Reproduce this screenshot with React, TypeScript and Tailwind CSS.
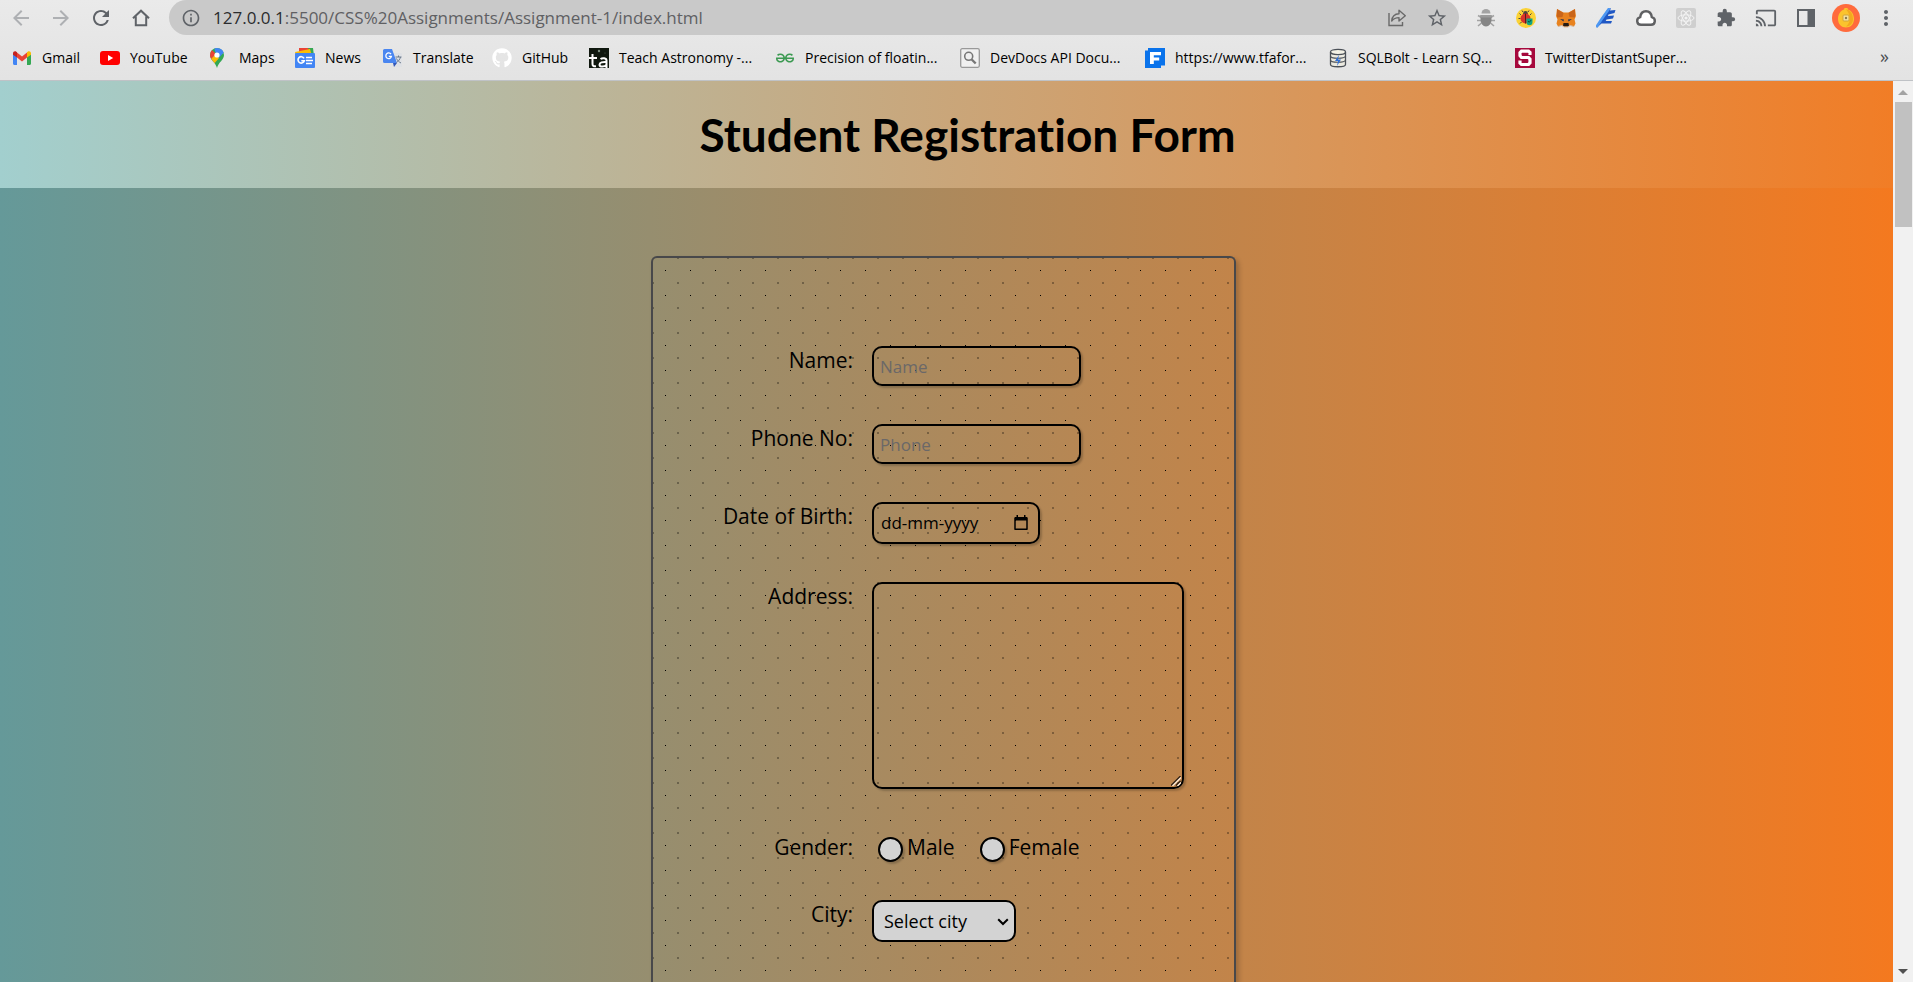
import type { ReactNode } from "react";
import { FaGithub } from "react-icons/fa";
import { MdArrowBack, MdArrowForward, MdRefresh, MdExtension, MdCast, MdMoreVert, MdStarBorder, MdInfoOutline } from "react-icons/md";
import { SiGeeksforgeeks } from "react-icons/si";

const GmailIcon = () => (
  <svg width="20" height="20" viewBox="0 0 20 20" aria-hidden="true">
    <path d="M1 5v10.500c0 .8.600 1.500 1.500 1.500H5V9z" fill="#4285f4" />
    <path d="M19 5v10.500c0 .8-.6 1.500-1.500 1.500H15V9z" fill="#34a853" />
    <path d="M5 4.500l5 3.900 5-3.900V9.500l-5 4-5-4z" fill="#ea4335" />
    <path d="M1 5.200C1 3.300 3.100 2.700 4.300 3.700L5 4.300v5.200L1 6.700z" fill="#c5221f" />
    <path d="M19 5.200c0-1.900-2.100-2.500-3.300-1.500l-.7.600v5.200l4-2.800z" fill="#fbbc04" />
  </svg>
);

const YouTubeIcon = () => (
  <svg width="20" height="20" viewBox="0 0 20 20" aria-hidden="true">
    <rect x="0" y="3" width="20" height="14" rx="3" fill="#f00" />
    <path d="M8 7l5.200 3L8 13z" fill="#fff" />
  </svg>
);

const MapsIcon = () => (
  <svg width="20" height="20" viewBox="0 0 20 20" aria-hidden="true">
    <defs>
      <clipPath id="pin">
        <path d="M8 0a7 7 0 0 1 7 7c0 5-5.500 7-7 13C6.500 14 1 12 1 7a7 7 0 0 1 7-7z" />
      </clipPath>
    </defs>
    <g clipPath="url(#pin)">
      <rect width="20" height="20" fill="#34a853" />
      <path d="M5 -1h11v4L8 10z" fill="#4285f4" />
      <path d="M0 12.500L13 -1l4 3L4 16z" fill="#4285f4" />
      <path d="M0 1l3 1 4 4-7 8z" fill="#ea4335" />
      <path d="M0 13l6-6 4 3-6 7z" fill="#fbbc04" />
    </g>
    <circle cx="8" cy="7" r="2.600" fill="#fff" />
  </svg>
);

const NewsIcon = () => (
  <svg width="20" height="20" viewBox="0 0 20 20" aria-hidden="true">
    <path d="M5 0h13l1 8H4z" fill="#34a853" />
    <path d="M4 0h9l3 7H4z" fill="#ea4335" />
    <path d="M0 4l15-3 2 7H1z" fill="#fbbc04" />
    <rect y="5" width="20" height="15" rx="1" fill="#4285f4" />
    <path d="M9 10.300A3.200 3.200 0 1 0 9.300 12.700H6.300" fill="none" stroke="#fff" strokeWidth="1.600" />
    <path d="M11 9.500h6M11 12.500h7M11 15.500h6" stroke="#fff" strokeWidth="1.600" />
  </svg>
);

const TranslateIcon = () => (
  <svg width="20" height="20" viewBox="0 0 20 20" aria-hidden="true">
    <path d="M8 5h10a1 1 0 0 1 1 1v12a1 1 0 0 1-1 1h-7z" fill="#dfe1e5" />
    <path d="M1.500 1H9l5 14H1.500A1.500 1.500 0 0 1 0 13.500v-11A1.500 1.500 0 0 1 1.500 1z" fill="#4a86f0" />
    <path d="M10 15h4l-3 4z" fill="#3257b8" />
    <path d="M8 6.200A2.800 2.800 0 1 0 8.400 8.400H5.800" fill="none" stroke="#fff" strokeWidth="1.300" />
    <path d="M12.500 9h6M15.500 7.500V9M17.500 9c-.5 2.500-2.500 4.500-4 5.500M13.500 10.500c.8 1.800 2.500 3.500 4.500 4.500" fill="none" stroke="#6b7a8c" strokeWidth="1" />
  </svg>
);

const AstronomyIcon = () => (
  <svg width="20" height="20" viewBox="0 0 20 20" aria-hidden="true">
    <rect width="20" height="20" fill="#10180f" />
    <circle cx="10" cy="3" r="1.200" fill="#7d8f80" />
    <circle cx="16" cy="5" r=".6" fill="#50604f" />
    <path d="M3.500 6v10c0 1.800 1 2.500 3.500 2.200M0 10h8M11.500 11c2-1.500 6-1 6 1.500V20M17.500 14c-4-.3-7 .3-7 2.700 0 2.500 5.500 2.600 7 0" fill="none" stroke="#fff" strokeWidth="2" />
  </svg>
);

const DocsIcon = () => (
  <svg width="20" height="20" viewBox="0 0 20 20" aria-hidden="true">
    <rect x=".7" y=".7" width="18.600" height="18.600" rx="1.500" fill="#f0f0f0" stroke="#999" strokeWidth="1.300" />
    <circle cx="8.700" cy="8.300" r="4" fill="none" stroke="#777" strokeWidth="1.600" />
    <path d="M11.700 11.500l4 4" stroke="#777" strokeWidth="2.400" />
  </svg>
);

const FormAssemblyIcon = () => (
  <svg width="20" height="20" viewBox="0 0 20 20" aria-hidden="true">
    <path d="M0 2.500h3V0h17v17.500h-4V20H0z" fill="#0a73eb" />
    <path d="M5 4h11v3.200H8.800v2.300h5.400v3H8.800V16H5z" fill="#fff" />
  </svg>
);

const DatabaseIcon = () => (
  <svg width="20" height="20" viewBox="0 0 20 20" aria-hidden="true">
    <path d="M2.500 4v12.500c0 3 15 3 15 0V4" fill="#eceae0" stroke="#4b5057" strokeWidth="1.300" />
    <ellipse cx="10" cy="4" rx="7.500" ry="2.600" fill="#f4f2e6" stroke="#4b5057" strokeWidth="1.300" />
    <path d="M2.500 8c0 3 15 3 15 0M2.500 12c0 3 15 3 15 0" fill="none" stroke="#4b5057" strokeWidth="1.200" />
    <path d="M11 7l-4 6h3l-1 5 4-6.500h-3z" fill="#2f6fd6" />
  </svg>
);

const SIcon = () => (
  <svg width="20" height="20" viewBox="0 0 20 20" aria-hidden="true">
    <rect width="20" height="20" fill="#a6093d" />
    <path d="M15 7V4.500L13.500 3.200h-7L5 4.700v3L6.500 9.500h7L15 11.200v3.600l-1.500 1.700h-7L5 15v-2.500" fill="none" stroke="#fff" strokeWidth="3.200" />
  </svg>
);

const BugIcon = () => (
  <svg width="20" height="20" viewBox="0 0 20 20" aria-hidden="true">
    <path d="M5.500 9.500L2 7.500M5 12.500H1M5.500 15L2 18M14.500 9.500L18 7.500M15 12.500h4M14.500 15l3.500 3" stroke="#a3a3a3" strokeWidth="1.600" />
    <path d="M5.500 5.500a4.500 4.500 0 0 1 9 0z" fill="#a3a3a3" />
    <path d="M4.500 7h11v5a5.500 6.500 0 0 1-11 0z" fill="#858585" />
    <path d="M4.500 7h11v2.500h-11z" fill="#9b9b9b" />
  </svg>
);

const LadybugIcon = () => (
  <svg width="20" height="20" viewBox="0 0 20 20" aria-hidden="true">
    <circle cx="10" cy="10" r="10" fill="#fbd235" />
    <path d="M5 7L3.500 5.500M4.500 10.500H2.500M5.500 14L4 15.500M14 7l1.500-1.500M7 4L6 2.500M12 4l1-1.500" stroke="#444" strokeWidth="1" />
    <circle cx="9.500" cy="5.300" r="2.300" fill="#444" />
    <circle cx="9.500" cy="10.500" r="5" fill="#d8352a" />
    <path d="M9.500 5.500v10" stroke="#58201c" strokeWidth="1" />
    <path d="M10.500 10.500h6v3.500a3 3.200 0 0 1-6 0z" fill="#10a383" />
    <path d="M12 13l1.200 1.300 2-2.300" fill="none" stroke="#0a4c3f" strokeWidth="1" />
  </svg>
);

const FoxIcon = () => (
  <svg width="20" height="20" viewBox="0 0 20 20" aria-hidden="true">
    <path d="M1 1l6.500 3.500h5L19 1l1 7-1.500 3.500 1 4-1.500 3-4-1-2 1.500H8l-2-1.500-4 1-1.500-3 1-4L0 8z" fill="#e8821e" />
    <path d="M1 1l6.500 4-1 4L1 9.500zM19 1l-6.500 4 1 4 5.500.5z" fill="#c9651a" />
    <path d="M4 11l4 .5-.5 2zM16 11l-4 .5.500 2z" fill="#2b3550" />
    <path d="M7.500 15h5l.5 2.500-1 1H8l-1-1z" fill="#241b16" />
    <path d="M2 18.500l4-1 2 1.500h4l2-1.500 4 1" fill="none" stroke="#d7b9a0" strokeWidth="1" />
  </svg>
);

const BlueQuillIcon = () => (
  <svg width="20" height="20" viewBox="0 0 20 20" aria-hidden="true">
    <path d="M11 2l4-2-1 2.500 5.500-.5-1 3-6 1.500-.5 1.500 6-.5-1 3-6.500 1-.8 1.500h6.300l-1 2.500H5.500L1 19.500 0 19z" fill="#1f57c4" />
    <path d="M13.500 0L5 12l-4.500 7" fill="none" stroke="#4d97f2" strokeWidth="2.600" />
  </svg>
);

const CloudIcon = () => (
  <svg width="22" height="20" viewBox="0 0 22 20" aria-hidden="true">
    <path d="M6 16.800a3.900 3.900 0 0 1-.8-7.700C5.600 5.500 8 3.200 11 3.200s5.400 2.300 5.800 5.900a3.900 3.900 0 0 1-.8 7.700z" fill="#fff" stroke="#5f6062" strokeWidth="2.400" />
  </svg>
);

const ReactIcon = () => (
  <svg width="20" height="20" viewBox="0 0 20 20" aria-hidden="true">
    <rect width="20" height="20" rx="2" fill="#cfcfcf" />
    <g fill="none" stroke="#f3f3f3" strokeWidth="1">
      <ellipse cx="10" cy="10" rx="8" ry="3.200" />
      <ellipse cx="10" cy="10" rx="8" ry="3.200" transform="rotate(60 10 10)" />
      <ellipse cx="10" cy="10" rx="8" ry="3.200" transform="rotate(120 10 10)" />
    </g>
    <circle cx="10" cy="10" r="1.600" fill="#f3f3f3" />
  </svg>
);

const PanelIcon = () => (
  <svg width="18" height="18" viewBox="0 0 18 18" aria-hidden="true">
    <rect x="1" y="1" width="16" height="16" fill="none" stroke="#5f6368" strokeWidth="2" />
    <rect x="10.500" y="1" width="6.500" height="16" fill="#5f6368" />
  </svg>
);

const AvatarIcon = () => (
  <svg width="28" height="28" viewBox="0 0 28 28" aria-hidden="true">
    <circle cx="14" cy="14" r="14" fill="#ff6b3d" />
    <path d="M12.500 4h3l.5 1.500c3.500 1 6 5 6 9.500 0 5-3.500 8.500-8 8.500S6 20 6 15c0-4.500 2.500-8.500 6-9.500z" fill="#fbc42d" />
    <path d="M14 5.500c4.500 0 7 5 7 9.500s-3 7.500-7 7.500c5-4 5-12 0-17z" fill="#f3a91f" />
    <rect x="11" y="11" width="6" height="6" rx="1" fill="#f5e3a0" stroke="#d2a43c" strokeWidth="1" />
    <circle cx="14" cy="14" r="1.200" fill="#8a7a52" />
  </svg>
);

const HomeIcon = () => (
  <svg width="18" height="18" viewBox="0 0 18 18" aria-hidden="true">
    <path d="M1 9.300L9 1.700l8 7.600M3.800 7.500v8.700h10.400V7.500" fill="none" stroke="#5f6368" strokeWidth="2" />
  </svg>
);

const ShareIcon = () => (
  <svg width="20" height="20" viewBox="0 0 20 20" aria-hidden="true">
    <path d="M2 5v12.500h13.500V14" fill="none" stroke="#6a6a6a" strokeWidth="1.400" />
    <path d="M4.700 13c.4-4.500 3-7 7.300-7.200V2.300l6.300 5.400L12 13V9.600c-3.300 0-5.500 1-7.300 3.400z" fill="none" stroke="#6a6a6a" strokeWidth="1.400" strokeLinejoin="round" />
  </svg>
);

const bookmarks: { label: string; width: string; icon: ReactNode }[] = [
  { label: "Gmail", width: "w-[88px]", icon: <GmailIcon /> },
  { label: "YouTube", width: "w-[109px]", icon: <YouTubeIcon /> },
  { label: "Maps", width: "w-[86px]", icon: <MapsIcon /> },
  { label: "News", width: "w-[88px]", icon: <NewsIcon /> },
  { label: "Translate", width: "w-[109px]", icon: <TranslateIcon /> },
  { label: "GitHub", width: "w-[97px]", icon: <FaGithub size={20} color="#fff" /> },
  { label: "Teach Astronomy -...", width: "w-[186px]", icon: <AstronomyIcon /> },
  { label: "Precision of floatin...", width: "w-[185px]", icon: <SiGeeksforgeeks size={18} color="#3c9a52" /> },
  { label: "DevDocs API Docu...", width: "w-[185px]", icon: <DocsIcon /> },
  { label: "https://www.tfafor...", width: "w-[183px]", icon: <FormAssemblyIcon /> },
  { label: "SQLBolt - Learn SQ...", width: "w-[187px]", icon: <DatabaseIcon /> },
  { label: "TwitterDistantSuper...", width: "w-[190px]", icon: <SIcon /> },
];

const extensions: { label: string; icon: ReactNode }[] = [
  { label: "Bug reporter", icon: <BugIcon /> },
  { label: "Ladybug", icon: <LadybugIcon /> },
  { label: "Wallet", icon: <FoxIcon /> },
  { label: "Quill", icon: <BlueQuillIcon /> },
  { label: "Cloud", icon: <CloudIcon /> },
  { label: "React tools", icon: <ReactIcon /> },
  { label: "Extensions", icon: <MdExtension size={20} /> },
  { label: "Cast", icon: <MdCast size={22} /> },
  { label: "Side panel", icon: <PanelIcon /> },
  { label: "Profile", icon: <AvatarIcon /> },
  { label: "Menu", icon: <MdMoreVert size={24} /> },
];

function IconButton({ label, children, faded }: { label: string; children: ReactNode; faded?: boolean }) {
  return (
    <button
      type="button"
      aria-label={label}
      className={`flex h-8 w-10 shrink-0 items-center justify-center ${faded ? "text-[#aeb0b3]" : "text-[#5f6368]"}`}
    >
      {children}
    </button>
  );
}

function BrowserBar() {
  return (
    <header className="shrink-0 border-b border-[#bfc2c6] bg-linear-to-b from-[#eaeaea] to-[#e3e3e3] font-['Open_Sans','Noto_Sans',sans-serif]">
      <div className="flex h-[35px] items-center pr-[7px]">
        <div className="flex w-[169px] shrink-0 items-center pl-px">
          <IconButton label="Back" faded><MdArrowBack size={24} /></IconButton>
          <IconButton label="Forward" faded><MdArrowForward size={24} /></IconButton>
          <IconButton label="Reload"><MdRefresh size={24} /></IconButton>
          <IconButton label="Home"><HomeIcon /></IconButton>
        </div>
        <div className="flex h-full min-w-0 flex-1 items-center rounded-full bg-[#c9c9c9] pr-[2px] pl-3">
          <MdInfoOutline size={20} className="shrink-0 text-[#5f6368]" />
          <p className="min-w-0 flex-1 truncate pl-3 text-[17px] leading-6 text-[#5f6063]">
            <span className="text-[#2b2c2e]">127.0.0.1</span>:5500/CSS%20Assignments/Assignment-1/index.html
          </p>
          <IconButton label="Share"><ShareIcon /></IconButton>
          <IconButton label="Bookmark this page"><MdStarBorder size={22} /></IconButton>
        </div>
        <div className="flex shrink-0 items-center pl-[7px]">
          {extensions.map((e) => (
            <IconButton key={e.label} label={e.label}>{e.icon}</IconButton>
          ))}
        </div>
      </div>
      <nav aria-label="Bookmarks" className="flex h-[45px] items-center pr-4 pl-3">
        <ul className="flex min-w-0 flex-1 items-center overflow-hidden">
          {bookmarks.map((b) => (
            <li key={b.label} className={`${b.width} shrink-0`}>
              <a href="#" className="flex h-6 items-center gap-[10px] text-[14px] leading-6 whitespace-nowrap text-black">
                <span className="flex w-5 shrink-0 justify-center">{b.icon}</span>
                {b.label}
              </a>
            </li>
          ))}
        </ul>
        <button type="button" aria-label="More bookmarks" className="px-2 pb-1 text-[18px] leading-6 text-[#4b4e52]">»</button>
      </nav>
    </header>
  );
}

const field = "rounded-[10px] border-2 border-black shadow-[2px_2px_2px_rgba(0,0,0,0.2)] text-[17px]";

function Row({ label, htmlFor, children }: { label: string; htmlFor: string; children: ReactNode }) {
  return (
    <div className="flex items-start gap-[19px]">
      <label htmlFor={htmlFor} className="w-[200px] shrink-0 text-right text-[21px] leading-[29px]">{label}</label>
      {children}
    </div>
  );
}

function RegistrationForm() {
  return (
    <form className="flex w-[585px] max-w-full flex-1 shrink-0 flex-col gap-[38px] rounded-t-md border-2 border-b-0 border-[#48484a] bg-[radial-gradient(circle,#000_3%,transparent_0),radial-gradient(circle_at_12px_12px,rgba(0,0,0,0.3)_5%,transparent_0)] bg-size-[25px_25px] bg-position-[0_0,13px_13px] pt-[88px] font-['Open_Sans','Noto_Sans',sans-serif] shadow-[3px_3px_5px_rgba(0,0,0,0.2)]">
      <Row label="Name:" htmlFor="name">
        <input id="name" type="text" placeholder="Name" className={`${field} h-10 w-[209px] bg-transparent px-[6px] placeholder:text-[#6b6868]`} />
      </Row>
      <Row label="Phone No:" htmlFor="phone">
        <input id="phone" type="tel" placeholder="Phone" className={`${field} h-10 w-[209px] bg-transparent px-[6px] placeholder:text-[#6b6868]`} />
      </Row>
      <Row label="Date of Birth:" htmlFor="dob">
        <div className={`${field} flex h-[42px] w-[168px] items-center justify-between pr-[9px] pl-[7px]`}>
          <input id="dob" type="text" placeholder="dd-mm-yyyy" className="w-[120px] bg-transparent outline-none placeholder:text-black" />
          <button type="button" aria-label="Open calendar">
            <svg width="16" height="16" viewBox="0 0 16 16" aria-hidden="true">
              <path d="M2 3h12v11.200H2z" fill="none" stroke="#000" strokeWidth="1.500" strokeLinejoin="round" />
              <path d="M2 2h12v3.500H2zM3.500 0H5v2H3.500zM11 0h1.500v2H11z" />
            </svg>
          </button>
        </div>
      </Row>
      <Row label="Address:" htmlFor="address">
        <div className="relative mb-[6px]">
          <textarea id="address" className={`${field} block h-[207px] w-[312px] resize-none bg-transparent px-2 py-1`} />
          <svg width="10" height="10" viewBox="0 0 10 10" className="pointer-events-none absolute right-[3px] bottom-[3px]" aria-hidden="true">
            <path d="M0 9.500L9.500 0M5 9.500L9.500 5" stroke="#2c2016" strokeWidth="1.300" />
            <path d="M1.500 10L10 1.500M6.500 10L10 6.500" stroke="#fbe9d8" strokeWidth="1.300" />
          </svg>
        </div>
      </Row>
      <fieldset className="flex items-start">
        <legend className="float-left w-[200px] text-right text-[21px] leading-[29px]">Gender:</legend>
        <div className="flex gap-[25px] pl-[25px] text-[21px] leading-[29px]">
          {["Male", "Female"].map((g) => (
            <label key={g} className="flex items-start gap-1">
              <input type="radio" name="gender" value={g} className="mt-1 size-[25px] appearance-none rounded-full border-2 border-black bg-[#d3d3d3] shadow-[2px_2px_2px_rgba(0,0,0,0.2)] checked:bg-[#555]" />
              {g}
            </label>
          ))}
        </div>
      </fieldset>
      <Row label="City:" htmlFor="city">
        <div className="relative">
          <select id="city" className="block h-[42px] w-[144px] appearance-none rounded-[10px] border-2 border-black bg-[#d3d3d3] pr-6 pl-[10px] text-[18px]">
            <option>Select city</option>
          </select>
          <svg width="12" height="8" viewBox="0 0 12 8" className="pointer-events-none absolute top-[18px] right-[7px]" aria-hidden="true">
            <path d="M1.200 1.200L6 6l4.800-4.800" fill="none" stroke="#000" strokeWidth="2" />
          </svg>
        </div>
      </Row>
    </form>
  );
}

function Scrollbar() {
  return (
    <div className="flex w-5 shrink-0 flex-col items-center bg-[#f1f1f1]" aria-hidden="true">
      <div className="flex h-[21px] items-center pt-[2px]">
        <svg width="10" height="5" viewBox="0 0 10 5"><path d="M0 5l5-5 5 5z" fill="#a3a3a3" /></svg>
      </div>
      <div className="h-[125px] w-[17px] bg-[#c1c1c1]" />
      <div className="flex-1" />
      <svg width="10" height="5" viewBox="0 0 10 5" className="mb-2"><path d="M0 0l5 5 5-5z" fill="#505050" /></svg>
    </div>
  );
}

export default function App() {
  return (
    <div className="flex h-screen flex-col overflow-hidden">
      <BrowserBar />
      <div className="flex min-h-0 flex-1">
        <main className="flex min-w-0 flex-1 flex-col items-center overflow-hidden bg-[linear-gradient(to_right,#659999,#f4791f)] text-black">
          <div className="flex h-[107px] w-full shrink-0 items-center justify-center bg-[linear-gradient(to_right,#a2cfce,#f17d26)] pl-[42px] font-['Lato',sans-serif]">
            <h1 className="text-[46px] leading-[60px] font-bold [font-variant-ligatures:none]">Student Registration Form</h1>
          </div>
          <div className="flex w-full flex-1 flex-col items-center pt-[68px] pr-[6px]">
            <RegistrationForm />
          </div>
        </main>
        <Scrollbar />
      </div>
    </div>
  );
}
